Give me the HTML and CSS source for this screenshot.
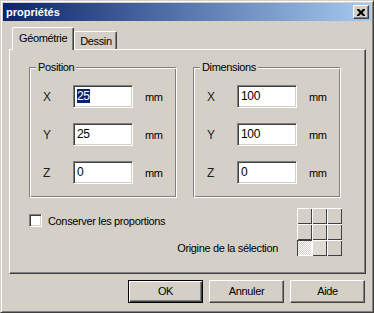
FILE: index.html
```html
<!DOCTYPE html>
<html lang="fr">
<head>
<meta charset="utf-8">
<title>propriétés</title>
<link rel="stylesheet" href="styles.css">
</head>
<body>
<div class="window">
  <div class="titlebar">
    <span class="title">propriétés</span>
    <div class="close">
      <svg width="8" height="7" viewBox="0 0 8 7"><path d="M0 0h2l2 2 2-2h2v1l-2.5 2.5L8 6v1H6L4 5 2 7H0V6l2.5-2.5L0 1z" fill="#000"/></svg>
    </div>
  </div>
  <div class="body">
    <div class="tabs">
      <div class="tab active">Géométrie</div>
      <div class="tab">Dessin</div>
    </div>
    <div class="panel">
      <div class="groups">
        <div class="group">
          <span class="legend">Position</span>
          <div class="row"><span class="axis">X</span><div class="field"><span class="sel">25</span></div><span class="unit">mm</span></div>
          <div class="row"><span class="axis">Y</span><div class="field">25</div><span class="unit">mm</span></div>
          <div class="row"><span class="axis">Z</span><div class="field">0</div><span class="unit">mm</span></div>
        </div>
        <div class="group">
          <span class="legend">Dimensions</span>
          <div class="row"><span class="axis">X</span><div class="field">100</div><span class="unit">mm</span></div>
          <div class="row"><span class="axis">Y</span><div class="field">100</div><span class="unit">mm</span></div>
          <div class="row"><span class="axis">Z</span><div class="field">0</div><span class="unit">mm</span></div>
        </div>
      </div>
      <div class="options">
        <div class="check"><span class="box"></span><span>Conserver les proportions</span></div>
        <div class="origin">
          <span class="origin-label">Origine de la sélection</span>
          <div class="grid">
            <span class="cell"></span><span class="cell"></span><span class="cell"></span>
            <span class="cell"></span><span class="cell"></span><span class="cell"></span>
            <span class="cell pressed"></span><span class="cell hover"></span><span class="cell"></span>
          </div>
        </div>
      </div>
    </div>
    <div class="buttons">
      <div class="btn default">OK</div>
      <div class="btn">Annuler</div>
      <div class="btn">Aide</div>
    </div>
  </div>
</div>
</body>
</html>
```

FILE: styles.css
```css
html, body {
  margin: 0;
  padding: 0;
  background: #d4d0c8;
}

.window {
  width: 374px;
  height: 313px;
  box-sizing: border-box;
  background: #d4d0c8;
  border: 1px solid;
  border-color: #d4d0c8 #404040 #404040 #d4d0c8;
  box-shadow: inset 1px 1px #ffffff, inset -1px -1px #808080;
  padding: 2px;
  font-family: "Liberation Sans", Arial, sans-serif;
  font-size: 11px;
  letter-spacing: -0.35px;
  color: #000;
  white-space: nowrap;
  display: flex;
  flex-direction: column;
}

.titlebar {
  height: 18px;
  background: linear-gradient(to right, #0a246a, #a6caf0);
  display: flex;
  align-items: center;
  justify-content: space-between;
  padding: 0 2px 0 3px;
}

.title {
  color: #fff;
  font-weight: bold;
  font-size: 11px;
  letter-spacing: 0;
}

.close {
  width: 16px;
  height: 14px;
  box-sizing: border-box;
  background: #d4d0c8;
  border: 1px solid;
  border-color: #ffffff #404040 #404040 #ffffff;
  box-shadow: inset -1px -1px #808080;
  display: flex;
  align-items: center;
  justify-content: center;
  padding-right: 1px;
}

.close svg {
  display: block;
}

.body {
  flex: 1;
  display: flex;
  flex-direction: column;
  padding: 6px 5px 0 6px;
}

.tabs {
  display: flex;
  align-items: flex-end;
  height: 22px;
  padding-left: 3px;
  position: relative;
  z-index: 1;
}

.tab {
  box-sizing: border-box;
  height: 18px;
  padding: 0 4px 0 5px;
  display: flex;
  align-items: center;
  border-top: 1px solid #fff;
  border-left: 1px solid #fff;
  border-right: 1px solid #404040;
  box-shadow: inset -1px 0 #808080;
  border-radius: 2px 2px 0 0;
  background: #d4d0c8;
}

.tab.active {
  height: 23px;
  margin-bottom: -1px;
  padding: 0 6px 3px 6px;
}

.panel {
  box-sizing: border-box;
  height: 225px;
  border: 1px solid;
  border-color: #ffffff #404040 #404040 #ffffff;
  box-shadow: inset -1px -1px #808080;
  padding: 11px 0 0 19px;
}

.groups {
  display: flex;
  gap: 16px;
}

.group {
  position: relative;
  box-sizing: border-box;
  width: 148px;
  height: 131px;
  margin-top: 6px;
  border: 1px solid;
  border-color: #808080 #ffffff #ffffff #808080;
  box-shadow: inset 1px 1px #ffffff, inset -1px -1px #808080;
  padding: 17px 0 0 13px;
  display: flex;
  flex-direction: column;
  gap: 15px;
}

.legend {
  position: absolute;
  top: -7px;
  left: 6px;
  padding: 0 2px;
  background: #d4d0c8;
  line-height: 13px;
}

.row {
  display: flex;
  align-items: center;
  height: 23px;
}

.axis {
  width: 30px;
  font-size: 12px;
  color: #202020;
}

.field {
  box-sizing: border-box;
  width: 60px;
  height: 23px;
  background: #fff;
  border: 1px solid;
  border-color: #808080 #ffffff #ffffff #808080;
  box-shadow: inset 1px 1px #404040, inset -1px -1px #d4d0c8;
  padding: 0 0 2px 3px;
  display: flex;
  align-items: center;
  font-size: 12px;
}

.sel {
  background: #0a246a;
  color: #fff;
}

.unit {
  margin-left: 12px;
}

.options {
  display: flex;
  justify-content: space-between;
  width: 313px;
  margin-top: 10px;
}

.check {
  display: flex;
  align-items: center;
  gap: 6px;
  margin-top: 6px;
  height: 13px;
  align-self: flex-start;
}

.box {
  box-sizing: border-box;
  width: 13px;
  height: 13px;
  background: #fff;
  border: 1px solid;
  border-color: #808080 #ffffff #ffffff #808080;
  box-shadow: inset 1px 1px #404040, inset -1px -1px #d4d0c8;
}

.origin {
  display: flex;
  align-items: flex-end;
  gap: 19px;
}

.origin-label {
  margin-bottom: 2px;
}

.grid {
  display: grid;
  grid-template-columns: repeat(3, 15px);
  grid-template-rows: repeat(3, 16px);
}

.cell {
  background: #d4d0c8;
  box-shadow: inset 1px 1px #ffffff, inset -1px -1px #404040;
}

.cell.pressed {
  background: repeating-conic-gradient(#ffffff 0 25%, #d4d0c8 0 50%) 0 0 / 2px 2px;
  box-shadow: inset 1px 1px #404040, inset -1px -1px #ffffff;
}

.cell.hover {
  background: #dedbd5;
}

.buttons {
  display: flex;
  justify-content: flex-end;
  gap: 6px;
  margin-top: 6px;
  padding-right: 1px;
}

.btn {
  box-sizing: border-box;
  width: 75px;
  height: 23px;
  border: 1px solid;
  border-color: #ffffff #404040 #404040 #ffffff;
  box-shadow: inset -1px -1px #808080;
  display: flex;
  align-items: center;
  justify-content: center;
  padding-bottom: 1px;
}

.btn.default {
  border: 1px solid #000;
  box-shadow: inset 1px 1px #ffffff, inset -1px -1px #404040, inset -2px -2px #808080;
}
```
